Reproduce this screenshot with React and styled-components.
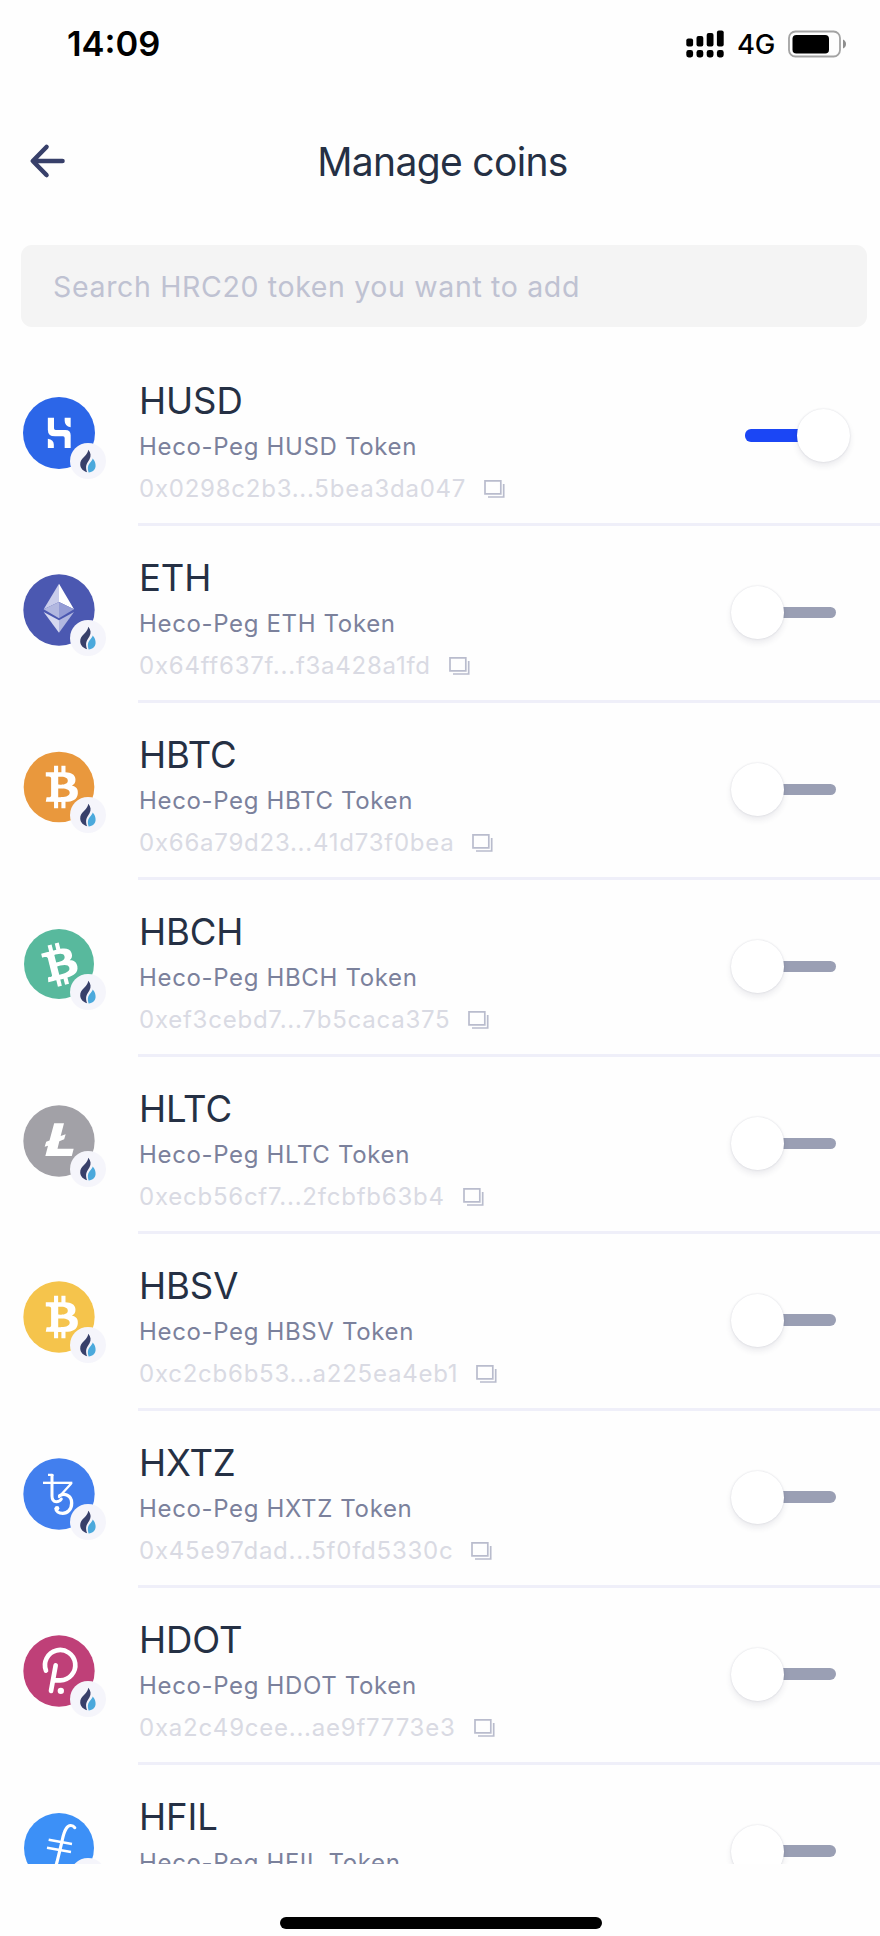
import React, { useState } from "react";
import styled, { createGlobalStyle } from "styled-components";

const GlobalStyle = createGlobalStyle`
  * {
    box-sizing: border-box;
  }

  body {
    margin: 0;
    background-color: #fefefe;
    font-family: Inter, "Liberation Sans", sans-serif;
  }
`;

const Screen = styled.div`
  display: flex;
  flex-direction: column;
  width: 880px;
  height: 1936px;
  overflow: hidden;
  background-color: #fefefe;
`;

const StatusBar = styled.div`
  display: flex;
  align-items: center;
  justify-content: space-between;
  height: 87px;
  padding: 0 34px 0 67px;
  color: #000;
`;

const Clock = styled.span`
  font-size: 34.5px;
  font-weight: 600;
`;

const StatusIcons = styled.div`
  display: flex;
  align-items: center;
`;

const Network = styled.span`
  width: 51px;
  padding-left: 13px;
  margin-right: 13px;
  font-size: 27.5px;
  font-weight: 500;
  letter-spacing: -0.3px;
  white-space: nowrap;
`;

const Header = styled.div`
  display: grid;
  grid-template-columns: 100px 1fr 100px;
  align-items: center;
  height: 150px;
  padding-bottom: 2px;
`;

const BackButton = styled.button`
  display: flex;
  padding: 0 0 0 28px;
  border: 0;
  background: none;
`;

const Title = styled.h1`
  margin: 0;
  padding-left: 5px;
  color: #253044;
  font-size: 39px;
  font-weight: 400;
  letter-spacing: -0.65px;
  text-align: center;
`;

const Search = styled.input`
  height: 82px;
  margin: 8px 13px 22px 21px;
  padding: 0 32px;
  border: 0;
  border-radius: 11px;
  background-color: #f4f4f4;
  font-family: inherit;
  font-size: 28.5px;
  letter-spacing: 0.65px;

  &::placeholder {
    color: #bfc2d2;
    opacity: 1;
  }
`;

const List = styled.div`
  height: 1515px;
  overflow: hidden;
`;

const Row = styled.div`
  display: flex;
  height: 176.95px;
  padding-left: 23px;
`;

const IconWrapper = styled.div`
  position: relative;
  width: 72px;
  height: 72px;
  margin: 47.8px 43px 0 0;
`;

const Badge = styled.div`
  position: absolute;
  top: 46px;
  left: 47px;
  display: flex;
  width: 36px;
  height: 36px;
  border-radius: 50%;
  background-color: #f5f5fb;
`;

const Details = styled.div`
  display: flex;
  flex: 1;
  justify-content: space-between;
  padding: 30px 30px 0 0;
  border-bottom: 3px solid #efeff9;
`;

const Name = styled.div`
  padding-left: 1px;
  color: #253044;
  font-size: 36.5px;
  line-height: 44px;
  letter-spacing: -0.1px;
`;

const Subtitle = styled.div`
  margin-top: 9px;
  padding-left: 1px;
  color: #7b819c;
  font-size: 24px;
  line-height: 30px;
  letter-spacing: 0.65px;
`;

const Address = styled.div`
  display: flex;
  align-items: center;
  gap: 18px;
  margin-top: 12px;
  padding-left: 1px;
  color: #d9dae3;
  font-size: 24px;
  line-height: 30px;
  letter-spacing: 0.76px;
`;

const Switch = styled.button`
  display: grid;
  align-items: center;
  width: 119px;
  height: 54px;
  margin-top: 29.5px;
  padding: 0;
  border: 0;
  background: none;
`;

const Track = styled.span`
  grid-area: 1 / 1;
  justify-self: center;
  width: 91px;
  height: ${(p) => (p.$on ? "12.5px" : "11.5px")};
  border-radius: 6px;
  background-color: ${(p) => (p.$on ? "#1b46f5" : "#9a9fb4")};
`;

const Knob = styled.span`
  grid-area: 1 / 1;
  justify-self: ${(p) => (p.$on ? "end" : "start")};
  width: 53px;
  height: 53px;
  border-radius: 50%;
  background-color: #fff;
  box-shadow: 0 0 2px rgba(40, 45, 80, 0.16), 0 4px 6px rgba(40, 45, 80, 0.09);
`;

const Footer = styled.div`
  display: flex;
  flex: 1;
  justify-content: center;
  padding: 53px 0 0 2px;
`;

const HomeIndicator = styled.div`
  width: 322px;
  height: 11.5px;
  border-radius: 6px;
  background-color: #000;
`;

const SignalIcon = () => (
  <svg width="38" height="28" viewBox="0 0 38 28">
    {[8.5, 6, 3, 0.5].map((top, i) => (
      <g key={top}>
        <rect x={i * 10.2 + 0.3} y={top} width="6.8" height={16.5 - top} rx="2" />
        <rect x={i * 10.2 + 0.3} y="20" width="6.8" height="7.5" rx="2.4" />
      </g>
    ))}
  </svg>
);

const BatteryIcon = () => (
  <svg width="58" height="28" viewBox="0 0 58 28">
    <rect
      x="1"
      y="1.5"
      width="51"
      height="25"
      rx="6.5"
      fill="none"
      stroke="#a3a3a3"
      strokeWidth="1.8"
    />
    <rect x="4.5" y="5" width="36.5" height="18.5" rx="3.8" />
    <path d="M55 9.5q3 1.5 3 4.5t-3 4.5z" fill="#8e8e8e" />
  </svg>
);

const ArrowIcon = () => (
  <svg
    width="40"
    height="36"
    viewBox="0 0 40 36"
    fill="none"
    stroke="#38406a"
    strokeWidth="4.6"
    strokeLinecap="round"
    strokeLinejoin="round"
  >
    <path d="M34.5 18H5M18.5 4L4.8 18l13.7 14" />
  </svg>
);

const CopyIcon = () => (
  <svg
    width="21"
    height="18"
    viewBox="0 0 21 18"
    fill="none"
    stroke="#b9bccd"
    strokeWidth="1.7"
  >
    <path d="M1 .9h15.8v13H1zM19.7 4v13H4" />
  </svg>
);

const HecoIcon = () => (
  <svg width="36" height="36" viewBox="0 0 36 36">
    <path
      fill="#38406a"
      d="M18.2 6.7c2.7 3 3.2 6.4 1.2 9.8-1.8 3-3.2 4.7-3.3 7.3-.1 2 .3 3.8 1 5.4-4-1-6.7-3.7-6.9-7.6-.2-3.5 1.6-5.6 4-7.9 2.5-2.4 3.7-4.3 4-7z"
    />
    <path
      fill="#4ba9dc"
      d="M22.7 15.6c2.1 2.3 3 4.8 2.9 7.5-.2 3.5-2.8 6.2-7 6.3-1.2-3.5-1.1-6.7 1-9.1 1.6-1.8 2.7-3 3.1-4.7z"
    />
  </svg>
);

const BitcoinMark = ({ transform }) => (
  <g transform={transform}>
    <path
      fill="#fff"
      d="M23.189 14.02c.314-2.096-1.283-3.223-3.465-3.975l.708-2.84-1.728-.43-.69 2.765c-.454-.114-.92-.22-1.385-.326l.695-2.783L15.596 6l-.708 2.839c-.376-.086-.746-.17-1.104-.26l.002-.009-2.384-.595-.46 1.846s1.283.294 1.256.312c.7.175.826.638.805 1.006l-.806 3.235c.048.012.11.03.18.057l-.183-.045-1.13 4.532c-.086.212-.303.531-.793.41.018.025-1.256-.313-1.256-.313l-.858 1.978 2.25.561c.418.105.828.215 1.231.318l-.715 2.872 1.727.43.708-2.84c.472.127.93.245 1.378.357l-.706 2.828 1.728.43.715-2.866c2.948.558 5.164.333 6.097-2.333.752-2.146-.037-3.385-1.588-4.192 1.13-.26 1.98-1.003 2.207-2.538zm-3.95 5.538c-.533 2.147-4.148.986-5.32.695l.95-3.805c1.172.293 4.929.872 4.37 3.11zm.535-5.569c-.487 1.953-3.495.96-4.47.717l.86-3.45c.975.243 4.118.696 3.61 2.733z"
    />
  </g>
);

// All marks are drawn on a 216 x 216 grid
const marks = {
  HUSD: (
    <path
      fill="#fff"
      d="M74.5 62H93v32q0 5 5 5h29q16 0 16 16v38h-18v-30q0-5-5-5H96q-21.5 0-21.5-20zM125 62h18v29q-18-4-18-20zM74.5 125q18 3 18 18v10h-18z"
    />
  ),
  ETH: (
    <g>
      <path fill="#c9cdeb" d="M108 29v55l-46 22z" />
      <path fill="#fff" d="M108 29v55l45 22z" />
      <path fill="#b2b8e0" d="M108 84v49l-46-27z" />
      <path fill="#949cd5" d="M108 84v49l45-27z" />
      <path fill="#d6d9f0" d="M62 114l46 25v37z" />
      <path fill="#b2b8e0" d="M153 114l-45 25v37z" />
    </g>
  ),
  HBTC: (
    <BitcoinMark transform="translate(112.5 108) scale(6.9 6.6) rotate(-14) translate(-16 -16)" />
  ),
  HBCH: (
    <BitcoinMark transform="translate(108 109) rotate(-14) scale(6.9 6.6) rotate(-14) translate(-16 -16)" />
  ),
  HLTC: (
    <path
      fill="#fff"
      d="M93.5 55H123l-10 38 15-5-4.5 15-14.5 6-5.5 22H152l-5.5 22H67l8-31-10 3.5 4.5-15 10-4z"
    />
  ),
  HXTZ: (
    <g
      fill="none"
      stroke="#fff"
      strokeWidth="9"
      strokeLinecap="round"
      strokeLinejoin="round"
    >
      <path strokeLinecap="butt" strokeWidth="7" d="M75 50.5h12q2 0 2 3" />
      <path d="M87 52v62c0 12 6 17 13 17 7 0 12-3 15-8" />
      <path strokeLinecap="butt" strokeWidth="7" d="M60 74.5h88" />
      <path strokeWidth="7" d="M144 77l-36 40" />
      <path
        strokeWidth="10"
        d="M110 113c13-8 36-3 36 22 0 20-13 31-27 31-12 0-20-6-20-14"
      />
      <circle cx="102" cy="151" r="7" fill="#fff" stroke="none" />
    </g>
  ),
  HDOT: (
    <g fill="none" stroke="#fff" strokeWidth="14" strokeLinecap="round">
      <path d="M69 107A45.500 45.500 0 1 1 112 136H95" />
      <path d="M98 91L84 168" />
      <circle cx="113.5" cy="167.5" r="9.5" fill="#fff" stroke="none" />
    </g>
  ),
  HFIL: (
    <g fill="none" stroke="#fff" strokeLinecap="round">
      <path
        strokeWidth="9.5"
        d="M155 47c-6-9-18-9-25 2-8 12-10 25-13 39l-15 62c-4 15-9 29-20 31"
      />
      <path strokeWidth="7.5" strokeLinecap="butt" d="M77 83l70 13M72 107l72 13" />
    </g>
  ),
};

const coins = [
  { name: "HUSD", color: "#2c66e8", r: 108, address: "0x0298c2b3...5bea3da047" },
  { name: "ETH", color: "#4b58b1", r: 107, address: "0x64ff637f...f3a428a1fd" },
  { name: "HBTC", color: "#e9983d", r: 106, address: "0x66a79d23...41d73f0bea" },
  { name: "HBCH", color: "#58b99d", r: 105, address: "0xef3cebd7...7b5caca375" },
  { name: "HLTC", color: "#a2a1a7", r: 107, address: "0xecb56cf7...2fcbfb63b4" },
  { name: "HBSV", color: "#f5c44c", r: 107, address: "0xc2cb6b53...a225ea4eb1" },
  { name: "HXTZ", color: "#427fee", r: 107, address: "0x45e97dad...5f0fd5330c" },
  { name: "HDOT", color: "#bf4078", r: 107, address: "0xa2c49cee...ae9f7773e3" },
  { name: "HFIL", color: "#3c90f7", r: 105, address: "0xae3a768f...9aa0ef9a7d" },
];

const Coin = ({ coin, on, onToggle }) => (
  <Row>
    <IconWrapper>
      <svg width="72" height="72" viewBox="0 0 216 216">
        <circle cx="108" cy="108" r={coin.r} fill={coin.color} />
        {marks[coin.name] || marks.HBTC}
      </svg>
      <Badge>
        <HecoIcon />
      </Badge>
    </IconWrapper>
    <Details>
      <div>
        <Name>{coin.name}</Name>
        <Subtitle>Heco-Peg {coin.name} Token</Subtitle>
        <Address>
          {coin.address}
          <CopyIcon />
        </Address>
      </div>
      <Switch role="switch" aria-checked={on} onClick={onToggle}>
        <Track $on={on} />
        <Knob $on={on} />
      </Switch>
    </Details>
  </Row>
);

const App = () => {
  const [enabled, setEnabled] = useState({ HUSD: true });

  const toggle = (name) =>
    setEnabled((prev) => ({ ...prev, [name]: !prev[name] }));

  return (
    <Screen>
      <GlobalStyle />
      <StatusBar>
        <Clock>14:09</Clock>
        <StatusIcons>
          <SignalIcon />
          <Network>4G</Network>
          <BatteryIcon />
        </StatusIcons>
      </StatusBar>
      <Header>
        <BackButton>
          <ArrowIcon />
        </BackButton>
        <Title>Manage coins</Title>
      </Header>
      <Search placeholder="Search HRC20 token you want to add" />
      <List>
        {coins.map((coin) => (
          <Coin
            key={coin.name}
            coin={coin}
            on={!!enabled[coin.name]}
            onToggle={() => toggle(coin.name)}
          />
        ))}
      </List>
      <Footer>
        <HomeIndicator />
      </Footer>
    </Screen>
  );
};

export default App;
